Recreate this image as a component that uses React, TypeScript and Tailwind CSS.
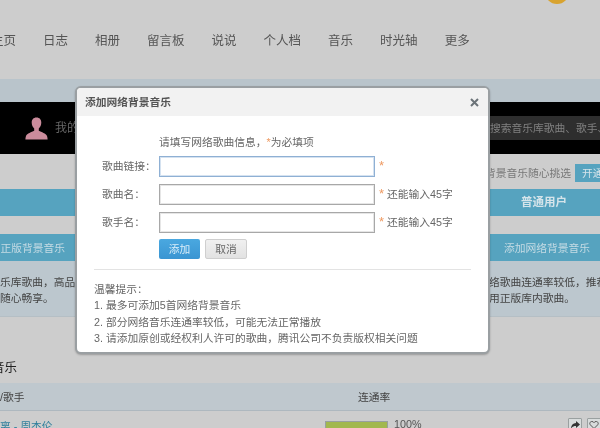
import React from "react";

const navItems = ["主页", "日志", "相册", "留言板", "说说", "个人档", "音乐", "时光轴", "更多"];

const fields = [
  { label: "歌曲链接：", hint: "", active: true },
  { label: "歌曲名：", hint: "还能输入45字", active: false },
  { label: "歌手名：", hint: "还能输入45字", active: false },
];

const tips = [
  "温馨提示：",
  "1. 最多可添加5首网络背景音乐",
  "2. 部分网络音乐连通率较低，可能无法正常播放",
  "3. 请添加原创或经权利人许可的歌曲，腾讯公司不负责版权相关问题",
];

const Dialog = () => {
  return (
    <div className="absolute left-[75px] top-[86px] w-[415px] h-[268px] bg-white rounded-[6px] border-2 border-[#9a9fa2] shadow-[0_1px_2px_rgba(0,0,0,0.25)] overflow-hidden">
      <div className="h-[28px] bg-[#f2f2f2] flex items-center justify-between pl-[8px] pr-[9px]">
        <span className="text-[10.75px] font-bold text-[#555]">添加网络背景音乐</span>
        <svg width="9" height="9" viewBox="0 0 9 9">
          <path d="M1 1L8 8M8 1L1 8" stroke="#6b7378" strokeWidth="2" />
        </svg>
      </div>
      <div className="pl-[82px] pt-[18px] text-[10.75px] leading-[16px] text-[#666]">
        <p>
          请填写网络歌曲信息，<span className="text-[#ee9a62]">*</span>为必填项
        </p>
        <div className="mt-[6px] flex flex-col gap-[8px]">
          {fields.map((f, index) => (
            <div key={index} className="flex items-center h-[20px] -ml-[57px]">
              <span className="w-[57px]">{f.label}</span>
              <div
                className={
                  f.active
                    ? "w-[216px] h-[21px] bg-white border border-[#8fb0d4] shadow-[inset_0_0_0_1px_#d5e2f0]"
                    : "w-[216px] h-[21px] bg-white border border-[#a8a8a8] shadow-[inset_0_0_0_1px_#e6e6e6]"
                }
              ></div>
              <span className="ml-[4px] text-[13px] text-[#ee9a62]">*</span>
              <span className="ml-[3px]">{f.hint}</span>
            </div>
          ))}
        </div>
        <div className="mt-[7px] flex gap-[5px]">
          <button className="w-[41px] h-[20px] rounded-[2px] bg-gradient-to-b from-[#4aa8e0] to-[#3a95d2] text-[#d9edf9] text-[10.75px]">添加</button>
          <button className="w-[42px] h-[20px] rounded-[2px] bg-gradient-to-b from-[#f0f0f0] to-[#e2e2e2] border border-[#cfcfcf] text-[#666] text-[10.75px]">取消</button>
        </div>
      </div>
      <div className="mx-[17px] mt-[10px] pt-[11px] border-t border-[#e3e3e3] text-[10.75px] leading-[16.4px] text-[#666]">
        {tips.map((t, index) => (
          <p key={index}>{t}</p>
        ))}
      </div>
    </div>
  );
};

export default function App() {
  return (
    <div
      className="relative w-[600px] h-[428px] overflow-hidden bg-[#cdcdcd] text-[#444] blur-[0.3px]"
      style={{ fontFamily: '"Liberation Sans", "Noto Sans CJK SC", sans-serif' }}
    >
      <div className="relative h-[79px]">
        <div className="absolute left-[545px] -top-[20px] w-[24px] h-[24px] rounded-full bg-[#d8a32f]"></div>
        <div className="flex gap-[27px] -ml-[9px] pt-[32px] text-[12.5px] leading-[18px] text-[#555]">
          {navItems.map((n) => (
            <span key={n}>{n}</span>
          ))}
        </div>
      </div>

      <div className="h-[23px] bg-[#b9c4cb]"></div>

      <div className="h-[52px] bg-black flex items-center justify-between pl-[25px]">
        <div className="flex items-center gap-[7px]">
          <svg width="23" height="23" viewBox="0 0 23 23">
            <path
              d="M11.500 0.500c-3.200 0-4.800 2.300-4.800 5 0 2.500 1 4.700 2.500 6v2.300c-2.600 1.500-7.200 2.500-8.200 5.200-.4 1-.6 2.500-.6 3.500h22.200c0-1-.2-2.500-.6-3.500-1-2.700-5.600-3.700-8.200-5.200v-2.300c1.500-1.300 2.500-3.500 2.500-6 0-2.700-1.600-5-4.800-5z"
              fill="#cb8c9c"
            />
          </svg>
          <span className="text-[12px] text-[#666]">我的音乐</span>
        </div>
        <div className="w-[120px] h-[24px] bg-[#2e2e2e] flex items-center pl-[10px] overflow-hidden whitespace-nowrap text-[10.75px] text-[#808080]">
          搜索音乐库歌曲、歌手、专辑
        </div>
      </div>

      <div className="h-[35px] pt-[3px] flex items-center justify-end gap-[4px] text-[10.75px] text-[#777]">
        <span>开通绿钻，海量正版背景音乐随心挑选</span>
        <span className="w-[25px] h-[18px] pl-[7px] bg-[#56a3bf] text-[#d5e4ea] whitespace-nowrap overflow-hidden leading-[18px]">开通</span>
      </div>

      <div className="h-[27px] pt-[1px] bg-[#56a3bf] flex items-center justify-end pr-[33px] text-[11.5px] font-bold text-[#d5e4ea]">
        普通用户
      </div>

      <div className="h-[18px]"></div>

      <div className="h-[27px] pt-[1px] bg-[#56a3bf] flex items-center justify-between pr-[10px] text-[10.75px] text-[#c5dbe4]">
        <span className="-ml-[21px]">使用正版背景音乐</span>
        <span>添加网络背景音乐</span>
      </div>

      <div className="h-[56px] bg-[#bcc7ce] border-b border-[#b5bfc5] pt-[13px] flex justify-between text-[10.75px] leading-[16px] text-[#444]">
        <div className="w-[76px] overflow-hidden">
          <p className="whitespace-nowrap">乐库歌曲，高品质音乐</p>
          <p className="whitespace-nowrap">随心畅享。</p>
        </div>
        <div className="w-[111px] overflow-hidden">
          <p className="whitespace-nowrap">络歌曲连通率较低，推荐</p>
          <p className="whitespace-nowrap">用正版库内歌曲。</p>
        </div>
      </div>

      <div className="h-[66px] flex items-end pb-[5px] -ml-[33px] text-[12.5px] leading-[20px] text-[#222]">
        背景音乐
      </div>

      <div className="h-[28px] pt-[1px] bg-[#bfc8ce] border-b border-[#aeb8bf] flex items-center text-[10.75px] text-[#444]">
        <span className="w-[358px]">/歌手</span>
        <span>连通率</span>
      </div>

      <div className="h-[17px] flex text-[10.75px] leading-[14px]">
        <span className="w-[325px] pt-[8px] text-[#2f7f9c] whitespace-nowrap shrink-0">离 - 周杰伦</span>
        <div className="w-[63px] h-[20px] bg-[#a2b84f] border border-[#98a0a0] shrink-0 mt-[10px]"></div>
        <span className="ml-[6px] pt-[6px] w-[174px] shrink-0 text-[#555]">100%</span>
        <div className="w-[14px] h-[14px] shrink-0 mt-[7px] flex items-center justify-center rounded-[1px] bg-[#d8dcdc] border border-[#9aa0a0]">
          <svg width="10" height="10" viewBox="0 0 10 10">
            <path d="M6 1l4 3.500L6 8V6C3.500 6 2 7 1 9c0-3.500 1.500-5.500 5-6z" fill="#333" />
          </svg>
        </div>
        <div className="w-[14px] h-[14px] shrink-0 mt-[7px] ml-[5px] flex items-center justify-center rounded-[1px] bg-[#d8dcdc] border border-[#9aa0a0]">
          <svg width="10" height="10" viewBox="0 0 10 10">
            <path d="M5 8.500L1.500 5C0 3.500 1 1.500 3 1.500c1 0 1.600.5 2 1.200.4-.7 1-1.200 2-1.200 2 0 3 2 1.500 3.500z" fill="none" stroke="#555" />
          </svg>
        </div>
      </div>

      <Dialog />
    </div>
  );
}
